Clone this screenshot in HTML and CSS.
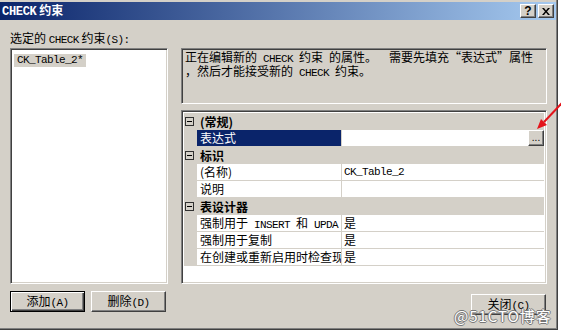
FILE: index.html
```html
<!DOCTYPE html>
<html lang="zh-CN">
<head>
<meta charset="utf-8">
<title>CHECK 约束</title>
<link rel="stylesheet" href="styles.css">
</head>
<body>
<div class="dlg">
  <div class="titlebar">
    <div class="title"><span class="en">CHECK</span> 约束</div>
    <div class="caps">
      <span class="cap help">?</span>
      <span class="cap"><svg width="8" height="7" viewBox="0 0 8 7"><path d="M0 0h2l2 2.4 2-2.4h2l-3 3.5 3 3.5h-2l-2-2.4-2 2.4h-2l3-3.5z" fill="#000"/></svg></span>
    </div>
  </div>
  <div class="main">
    <div class="lbl">选定的 <span class="en">CHECK</span> 约束<span class="en">(S):</span></div>
    <div class="list sunken"><span class="item en">CK_Table_2*</span></div>
    <div class="rightcol">
      <div class="desc sunken">正在编辑新的<span class="en"> CHECK </span>约束<span class="en"> </span>的属性。<span class="en">  </span>需要先填充“表达式”属性<br>，然后才能接受新的<span class="en"> CHECK </span>约束。</div>
      <div class="pgrid sunken">
        <div class="cat"><span class="pm"></span><b>(常规)</b></div>
        <div class="row sel"><div class="k">表达式</div><div class="v"><span class="dots">...</span></div></div>
        <div class="cat"><span class="pm"></span><b>标识</b></div>
        <div class="row"><div class="k">(名称)</div><div class="v"><span class="en">CK_Table_2</span></div></div>
        <div class="row"><div class="k">说明</div><div class="v"></div></div>
        <div class="cat"><span class="pm"></span><b>表设计器</b></div>
        <div class="row"><div class="k">强制用于<span class="en"> INSERT </span>和<span class="en"> UPDA</span></div><div class="v">是</div></div>
        <div class="row"><div class="k">强制用于复制</div><div class="v">是</div></div>
        <div class="row"><div class="k">在创建或重新启用时检查现</div><div class="v">是</div></div>
      </div>
    </div>
    <div class="btns"><button class="btn def">添加<span class="en">(A)</span></button><button class="btn">删除<span class="en">(D)</span></button></div>
    <div class="btns end"><button class="btn">关闭<span class="en">(C)</span></button></div>
  </div>
  <div class="wm">@51CTO博客</div>
</div>
<svg class="arrow" width="31" height="35" viewBox="0 0 31 35">
  <path d="M32 5 L14 24" stroke="#e4141b" stroke-width="2" fill="none"/>
  <path d="M7 31 L17 27 L11 21 Z" fill="#e4141b"/>
</svg>
</body>
</html>
```
FILE: styles.css
```css
* { box-sizing: border-box; }
html, body { margin: 0; padding: 0; }
body {
  width: 561px;
  height: 335px;
  background: #fff;
  font-family: "Noto Sans CJK SC", "Noto Sans", sans-serif;
  font-size: 12px;
  line-height: 12px;
  color: #000;
  position: relative;
  overflow: hidden;
}
.en {
  font-family: "Liberation Mono", "DejaVu Sans Mono", monospace;
  font-size: 11px;
  letter-spacing: -0.6px;
}
.dlg {
  width: 558px;
  height: 330px;
  background: #d4d0c8;
  border-right: 1px solid #404040;
  border-bottom: 1px solid #404040;
  box-shadow: inset -1px -1px #808080;
  padding: 2px 1px 1px 0;
  position: relative;
}
.titlebar {
  height: 18px;
  background: linear-gradient(to right, #0a246a, #a6caf0);
  display: flex;
  align-items: center;
  justify-content: space-between;
  padding: 0 2px 0 2px;
}
.title {
  color: #fff;
  font-weight: bold;
  font-size: 12px;
}
.title .en { font-size: 12px; font-weight: bold; letter-spacing: -0.3px; }
.caps { display: flex; gap: 2px; }
.cap {
  width: 16px;
  height: 14px;
  background: #d4d0c8;
  border: 1px solid;
  border-color: #fff #404040 #404040 #fff;
  box-shadow: inset -1px -1px #808080;
  display: flex;
  align-items: center;
  justify-content: center;
}
.help {
  font-family: "Liberation Sans", sans-serif;
  font-weight: bold;
  font-size: 12px;
  line-height: 12px;
}
.main {
  display: grid;
  grid-template-columns: 158px 366px;
  grid-template-rows: 16px 236px auto;
  column-gap: 13px;
  padding: 12px 0 0 10px;
}
.lbl { grid-column: 1; grid-row: 1; }
.sunken {
  border: 1px solid;
  border-color: #808080 #fff #fff #808080;
  box-shadow: inset 1px 1px #404040, inset -1px -1px #d4d0c8;
}
.list {
  grid-column: 1;
  grid-row: 2;
  background: #fff;
  padding: 3px 3px;
}
.item {
  display: inline-block;
  background: #d4d0c8;
  padding: 0 3px;
  line-height: 13px;
  height: 13px;
}
.rightcol {
  grid-column: 2;
  grid-row: 2;
  display: flex;
  flex-direction: column;
  gap: 6px;
}
.desc {
  height: 56px;
  padding: 2px 2px 0 3px;
  white-space: pre;
  overflow: hidden;
}
.pgrid {
  flex: 1;
  background: #fff;
  padding: 2px;
}
.cat {
  height: 17px;
  background: #d4d0c8;
  display: flex;
  align-items: center;
}
.pm {
  width: 9px;
  height: 9px;
  margin-left: 1px;
  border: 1px solid #303030;
  position: relative;
}
.pm::after {
  content: "";
  position: absolute;
  left: 1px;
  top: 3px;
  width: 5px;
  height: 1px;
  background: #000;
}
.cat b { margin-left: 6px; font-weight: bold; }
.row {
  height: 17px;
  display: flex;
  padding-left: 13px;
  background: #d4d0c8;
}
.k {
  width: 145px;
  background: #fff;
  border-right: 1px solid #d4d0c8;
  border-bottom: 1px solid #d4d0c8;
  padding-left: 3px;
  line-height: 16px;
  white-space: nowrap;
  overflow: hidden;
}
.v {
  flex: 1;
  background: #fff;
  border-bottom: 1px solid #d4d0c8;
  padding-left: 2px;
  line-height: 16px;
  display: flex;
  justify-content: space-between;
  white-space: nowrap;
}
.sel .k { background: #0a246a; color: #fff; }
.dots {
  margin-left: auto;
  width: 16px;
  height: 16px;
  background: #d4d0c8;
  border: 1px solid;
  border-color: #fff #404040 #404040 #fff;
  box-shadow: inset -1px -1px #808080;
  font-family: "Liberation Sans", sans-serif;
  font-size: 10px;
  line-height: 14px;
  text-align: center;
}
.btns {
  grid-column: 1;
  grid-row: 3;
  display: flex;
  gap: 6px;
  margin-top: 7px;
}
.btns.end {
  grid-column: 2;
  justify-content: flex-end;
  margin-top: 10px;
  padding-right: 1px;
}
.btn {
  width: 75px;
  height: 21px;
  background: #d4d0c8;
  border: 1px solid;
  border-color: #fff #404040 #404040 #fff;
  box-shadow: inset -1px -1px #808080;
  font-family: "Noto Sans CJK SC", sans-serif;
  font-size: 12px;
  line-height: 12px;
  padding: 0;
  color: #000;
}
.btn.def {
  border-color: #000;
  box-shadow: inset 1px 1px #fff, inset -1px -1px #404040, inset -2px -2px #808080;
}
.wm {
  position: absolute;
  left: 454px;
  top: 307px;
  font-family: "Noto Sans CJK SC", sans-serif;
  font-size: 15px;
  line-height: 17px;
  letter-spacing: 1px;
  color: #fff;
  text-shadow: -1px 0 #777, 1px 0 #777, 0 -1px #777, 0 1px #777;
}
.arrow {
  position: absolute;
  left: 530px;
  top: 98px;
}
```
